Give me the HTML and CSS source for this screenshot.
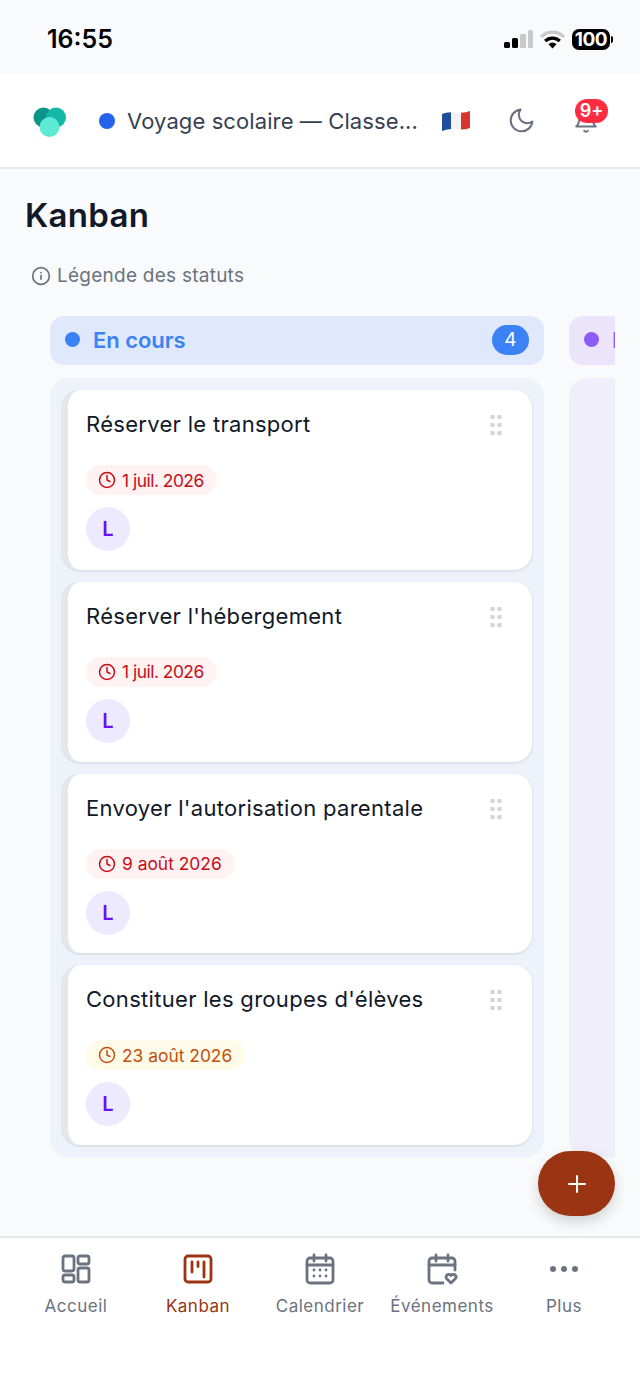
FILE: index.html
```html
<!DOCTYPE html>
<html lang="fr">
<head>
  <meta charset="UTF-8" />
  <meta name="viewport" content="width=device-width, initial-scale=1.0" />
  <title>Kanban</title>
  <link rel="stylesheet" href="styles.css">
</head>
<body>
  <div class="statusbar">
    <span class="time">16:55</span>
    <div class="status-icons">
      <svg width="29" height="18" viewBox="0 0 29 18"><rect x="0" y="12" width="6" height="6" rx="1.5" fill="#000"/><rect x="8" y="8" width="6" height="10" rx="1.5" fill="#000"/><rect x="16" y="4" width="6" height="14" rx="1.5" fill="#c9c9c9"/><rect x="24" y="0" width="5" height="18" rx="1.5" fill="#c9c9c9"/></svg>
      <svg width="25" height="19" viewBox="0 0 25 19"><path d="M1 7 A16 16 0 0 1 24 7" fill="none" stroke="#c9c9c9" stroke-width="3.2"/><path d="M5.2 11 A10.5 10.5 0 0 1 19.8 11" fill="none" stroke="#000" stroke-width="3.2"/><path d="M8.5 14.2 A5.5 5.5 0 0 1 16.5 14.2 L12.5 18.5 Z" fill="#000"/></svg>
      <div class="battery"><span class="battery-level">100</span><span class="battery-tip"></span></div>
    </div>
  </div>

  <header class="topbar">
    <svg class="logo" width="34" height="30" viewBox="0 0 34 30"><circle cx="10.5" cy="10.5" r="10" fill="#0d9488"/><circle cx="23" cy="10.5" r="10" fill="#14b8a6"/><circle cx="16.5" cy="20" r="10" fill="#5eead4"/></svg>
    <span class="project-dot"></span>
    <span class="project-name">Voyage scolaire — Classe...</span>
    <svg class="flag" width="30" height="22" viewBox="0 0 30 22"><path d="M1 4 Q8 1 15 2.500 T29 1 V18 Q22 20 15 19 T1 21 Z" fill="#f2f2f2"/><path d="M1 4 Q5 2.500 10 2.300 V19 Q5 19.500 1 21 Z" fill="#1f4e9c"/><path d="M20 2.800 Q25 2.500 29 1 V18 Q25 19.500 20 19.500 Z" fill="#d8352c"/></svg>
    <svg class="top-icon" width="29" height="29" viewBox="0 0 24 24" fill="none" stroke="#6b7280" stroke-width="1.700" stroke-linecap="round" stroke-linejoin="round"><path d="M21 12.800A9 9 0 1 1 11.200 3a7 7 0 0 0 9.800 9.800z"/></svg>
    <div class="bell">
      <svg width="26" height="26" viewBox="0 0 24 24" fill="none" stroke="#6b7280" stroke-width="1.800" stroke-linecap="round" stroke-linejoin="round"><path d="M18 8a6 6 0 0 0-12 0c0 7-3 9-3 9h18s-3-2-3-9"/><path d="M13.700 21a2 2 0 0 1-3.400 0"/></svg>
      <span class="bell-badge">9+</span>
    </div>
  </header>

  <main class="content">
    <h1>Kanban</h1>
    <div class="legend">
      <svg width="20" height="20" viewBox="0 0 24 24" fill="none" stroke="#6b7280" stroke-width="2" stroke-linecap="round"><circle cx="12" cy="12" r="10"/><path d="M12 16v-4.500"/><path d="M12 8h.01"/></svg>
      <span>Légende des statuts</span>
    </div>

    <div class="board">
      <section class="column">
        <div class="col-head">
          <span class="col-dot"></span>
          <span class="col-title">En cours</span>
          <span class="col-count">4</span>
        </div>
        <div class="col-body">
          <article class="card">
            <div class="card-top">
              <span class="card-title">Réserver le transport</span>
              <svg class="grip" width="12" height="22" viewBox="0 0 12 22" fill="#d1d5db"><circle cx="2.500" cy="3" r="2.300"/><circle cx="9.500" cy="3" r="2.300"/><circle cx="2.500" cy="11" r="2.300"/><circle cx="9.500" cy="11" r="2.300"/><circle cx="2.500" cy="19" r="2.300"/><circle cx="9.500" cy="19" r="2.300"/></svg>
            </div>
            <span class="due due-late due-short">
              <svg width="18" height="18" viewBox="0 0 24 24" fill="none" stroke="currentColor" stroke-width="2" stroke-linecap="round" stroke-linejoin="round"><circle cx="12" cy="12" r="10"/><path d="M12 6v6l4 2"/></svg>
              1 juil. 2026
            </span>
            <span class="avatar">L</span>
          </article>
          <article class="card">
            <div class="card-top">
              <span class="card-title">Réserver l'hébergement</span>
              <svg class="grip" width="12" height="22" viewBox="0 0 12 22" fill="#d1d5db"><circle cx="2.500" cy="3" r="2.300"/><circle cx="9.500" cy="3" r="2.300"/><circle cx="2.500" cy="11" r="2.300"/><circle cx="9.500" cy="11" r="2.300"/><circle cx="2.500" cy="19" r="2.300"/><circle cx="9.500" cy="19" r="2.300"/></svg>
            </div>
            <span class="due due-late due-short">
              <svg width="18" height="18" viewBox="0 0 24 24" fill="none" stroke="currentColor" stroke-width="2" stroke-linecap="round" stroke-linejoin="round"><circle cx="12" cy="12" r="10"/><path d="M12 6v6l4 2"/></svg>
              1 juil. 2026
            </span>
            <span class="avatar">L</span>
          </article>
          <article class="card">
            <div class="card-top">
              <span class="card-title">Envoyer l'autorisation parentale</span>
              <svg class="grip" width="12" height="22" viewBox="0 0 12 22" fill="#d1d5db"><circle cx="2.500" cy="3" r="2.300"/><circle cx="9.500" cy="3" r="2.300"/><circle cx="2.500" cy="11" r="2.300"/><circle cx="9.500" cy="11" r="2.300"/><circle cx="2.500" cy="19" r="2.300"/><circle cx="9.500" cy="19" r="2.300"/></svg>
            </div>
            <span class="due due-late">
              <svg width="18" height="18" viewBox="0 0 24 24" fill="none" stroke="currentColor" stroke-width="2" stroke-linecap="round" stroke-linejoin="round"><circle cx="12" cy="12" r="10"/><path d="M12 6v6l4 2"/></svg>
              9 août 2026
            </span>
            <span class="avatar">L</span>
          </article>
          <article class="card">
            <div class="card-top">
              <span class="card-title">Constituer les groupes d'élèves</span>
              <svg class="grip" width="12" height="22" viewBox="0 0 12 22" fill="#d1d5db"><circle cx="2.500" cy="3" r="2.300"/><circle cx="9.500" cy="3" r="2.300"/><circle cx="2.500" cy="11" r="2.300"/><circle cx="9.500" cy="11" r="2.300"/><circle cx="2.500" cy="19" r="2.300"/><circle cx="9.500" cy="19" r="2.300"/></svg>
            </div>
            <span class="due due-soon">
              <svg width="18" height="18" viewBox="0 0 24 24" fill="none" stroke="currentColor" stroke-width="2" stroke-linecap="round" stroke-linejoin="round"><circle cx="12" cy="12" r="10"/><path d="M12 6v6l4 2"/></svg>
              23 août 2026
            </span>
            <span class="avatar">L</span>
          </article>
        </div>
      </section>

      <section class="column column-next">
        <div class="col-head">
          <span class="col-dot"></span>
          <span class="col-title">En revue</span>
        </div>
        <div class="col-body"></div>
      </section>
    </div>

    <button class="fab" type="button">
      <svg width="20" height="20" viewBox="0 0 20 20" fill="none" stroke="#fff" stroke-width="2" stroke-linecap="round"><path d="M10 2v16M2 10h16"/></svg>
    </button>
  </main>

  <nav class="tabbar">
    <a class="tab">
      <svg width="32" height="32" viewBox="0 0 32 32" fill="none" stroke="currentColor" stroke-width="2.800" stroke-linejoin="round"><rect x="3" y="3" width="11" height="15" rx="2"/><rect x="18" y="3" width="11" height="8" rx="2"/><rect x="3" y="22" width="11" height="7" rx="2"/><rect x="18" y="15" width="11" height="14" rx="2"/></svg>
      <span>Accueil</span>
    </a>
    <a class="tab tab-active">
      <svg width="32" height="32" viewBox="0 0 32 32" fill="none" stroke="currentColor" stroke-width="2.800" stroke-linecap="round" stroke-linejoin="round"><rect x="3" y="3" width="26" height="26" rx="3"/><path d="M10 9v10M16 9v4.500M22 9v15"/></svg>
      <span>Kanban</span>
    </a>
    <a class="tab">
      <svg width="32" height="32" viewBox="0 0 32 32" fill="none" stroke="currentColor" stroke-width="2.800" stroke-linecap="round" stroke-linejoin="round"><rect x="3" y="5" width="26" height="25" rx="3"/><path d="M3 12h26M10 2v6M22 2v6"/><path d="M10 17h.01M16 17h.01M22 17h.01M10 23h.01M16 23h.01M22 23h.01"/></svg>
      <span>Calendrier</span>
    </a>
    <a class="tab">
      <svg width="32" height="32" viewBox="0 0 32 32" fill="none" stroke="currentColor" stroke-width="2.800" stroke-linecap="round" stroke-linejoin="round"><path d="M29 17V8a3 3 0 0 0-3-3H6a3 3 0 0 0-3 3v19a3 3 0 0 0 3 3h11"/><path d="M3 12h26M10 2v6M22 2v6"/><path d="M25 30l-4.500-4.500a2.700 2.700 0 0 1 4.500-3 2.700 2.700 0 0 1 4.500 3z"/></svg>
      <span>Événements</span>
    </a>
    <a class="tab">
      <svg width="32" height="32" viewBox="0 0 32 32" fill="currentColor"><circle cx="5" cy="16" r="3"/><circle cx="16" cy="16" r="3"/><circle cx="27" cy="16" r="3"/></svg>
      <span>Plus</span>
    </a>
  </nav>
</body>
</html>
```

FILE: styles.css
```css
* {
  box-sizing: border-box;
}
body {
  font-family: Inter, "Noto Sans", sans-serif;
  background: #f9fafb;
  color: #111827;
  margin: 0;
  width: 640px;
  height: 1386px;
  overflow: hidden;
  display: flex;
  flex-direction: column;
}

/* phone status bar */
.statusbar {
  height: 74px;
  padding: 4px 27px 0 47px;
  display: flex;
  align-items: center;
  justify-content: space-between;
}
.time {
  font-size: 25px;
  font-weight: 600;
  color: #000;
}
.status-icons {
  display: flex;
  align-items: center;
  gap: 7px;
}
.battery {
  display: flex;
  align-items: center;
}
.battery-level {
  background: #000;
  color: #fff;
  font-size: 19px;
  font-weight: 700;
  line-height: 21px;
  width: 38px;
  text-align: center;
  border-radius: 7px;
  letter-spacing: -0.5px;
}
.battery-tip {
  width: 2px;
  height: 7px;
  margin-left: 1px;
  background: #000;
  border-radius: 0 2px 2px 0;
}

/* app header */
.topbar {
  height: 95px;
  background: #fff;
  border-bottom: 2px solid #e5e7eb;
  display: flex;
  align-items: center;
  padding: 0 27px 0 33px;
}
.logo {
  flex: none;
  margin-top: 3px;
}
.project-dot {
  width: 16px;
  height: 16px;
  border-radius: 50%;
  background: #2563eb;
  margin-left: 32px;
  flex: none;
}
.project-name {
  font-size: 22px;
  letter-spacing: 0.1px;
  color: #374151;
  margin-left: 12px;
  width: 300px;
  white-space: nowrap;
}
.flag {
  margin-left: 14px;
  flex: none;
}
.top-icon {
  margin-left: 36px;
  flex: none;
}
.bell {
  position: relative;
  margin-left: 37px;
  width: 26px;
  height: 26px;
  flex: none;
}
.bell-badge {
  position: absolute;
  top: -9px;
  left: 2px;
  width: 33px;
  height: 24px;
  border-radius: 12px;
  background: #ff2d3f;
  color: #fff;
  font-size: 18px;
  font-weight: 600;
  line-height: 24px;
  text-align: center;
}

/* page */
.content {
  flex: 1;
  position: relative;
  padding: 0 25px;
  min-height: 0;
}
h1 {
  font-size: 33px;
  font-weight: 600;
  letter-spacing: 0.3px;
  line-height: 40px;
  margin: 26px 0 0;
  color: #111827;
}
.legend {
  display: flex;
  align-items: center;
  gap: 6px;
  margin: 28px 0 0 6px;
  font-size: 19px;
  letter-spacing: 0.25px;
  line-height: 26px;
  color: #6b7280;
}
.board {
  display: flex;
  gap: 25px;
  margin: 27px 0 0 25px;
  width: 565px;
  overflow: hidden;
}
.column {
  width: 494px;
  flex: none;
  display: flex;
  flex-direction: column;
}
.col-head {
  height: 49px;
  border-radius: 14px;
  background: #e0e9fb;
  display: flex;
  align-items: center;
  padding: 0 15px 2px 15px;
}
.col-dot {
  width: 15px;
  height: 15px;
  border-radius: 50%;
  background: #3b82f6;
  flex: none;
}
.col-title {
  font-size: 22px;
  font-weight: 600;
  letter-spacing: -0.05px;
  color: #3b82f6;
  margin-left: 13px;
  flex: 1;
}
.col-count {
  width: 37px;
  height: 30px;
  border-radius: 15px;
  background: #3b82f6;
  color: #fff;
  font-size: 19px;
  line-height: 30px;
  text-align: center;
}
.col-body {
  flex: 1;
  margin-top: 13px;
  padding: 12px;
  border-radius: 18px;
  background: #edf2fb;
  display: flex;
  flex-direction: column;
  gap: 12px;
}
.column-next .col-head {
  background: #ebe4fb;
}
.column-next .col-dot {
  background: #8b5cf6;
}
.column-next .col-title {
  color: #8b5cf6;
}
.column-next .col-body {
  background: #f1eefb;
}

/* cards */
.card {
  height: 179.75px;
  background: #fff;
  border-radius: 18px;
  border-left: 6px solid #e5e7eb;
  box-shadow: 0 1px 3px rgba(0, 0, 0, 0.12);
  padding: 19px 30px 0 18px;
  display: flex;
  flex-direction: column;
  align-items: flex-start;
}
.card-top {
  width: 100%;
  display: flex;
  justify-content: space-between;
  align-items: flex-start;
  height: 56px;
}
.card-title {
  font-size: 22px;
  letter-spacing: 0.3px;
  line-height: 30px;
  color: #111827;
}
.grip {
  margin-top: 5px;
}
.due {
  display: inline-flex;
  align-items: center;
  gap: 6px;
  height: 30px;
  padding: 0 13px 0 12px;
  border-radius: 15px;
  font-size: 17.4px;
}
.due-short {
  letter-spacing: -0.5px;
}
.due-late {
  background: #fef2f2;
  color: #c70d1a;
}
.due-soon {
  background: #fefbe8;
  color: #c2500f;
}
.avatar {
  width: 44px;
  height: 44px;
  border-radius: 50%;
  margin-top: 12px;
  background: #ede9fe;
  color: #6d0ff0;
  font-size: 20px;
  font-weight: 600;
  line-height: 44px;
  text-align: center;
}

.fab {
  position: absolute;
  right: 25px;
  bottom: 20px;
  width: 77px;
  height: 65px;
  border: none;
  border-radius: 33px;
  background: #9a3412;
  box-shadow: 0 6px 14px rgba(0, 0, 0, 0.16);
  display: flex;
  align-items: center;
  justify-content: center;
}

/* bottom navigation */
.tabbar {
  height: 150px;
  flex: none;
  background: #fff;
  border-top: 2px solid #e5e7eb;
  display: flex;
  padding: 15px 15px 0;
}
.tab {
  flex: 1;
  display: flex;
  flex-direction: column;
  align-items: center;
  gap: 11px;
  color: #6b7280;
  font-size: 17px;
  letter-spacing: 0.5px;
  white-space: nowrap;
}
.tab-active {
  color: #9a3412;
}
```
